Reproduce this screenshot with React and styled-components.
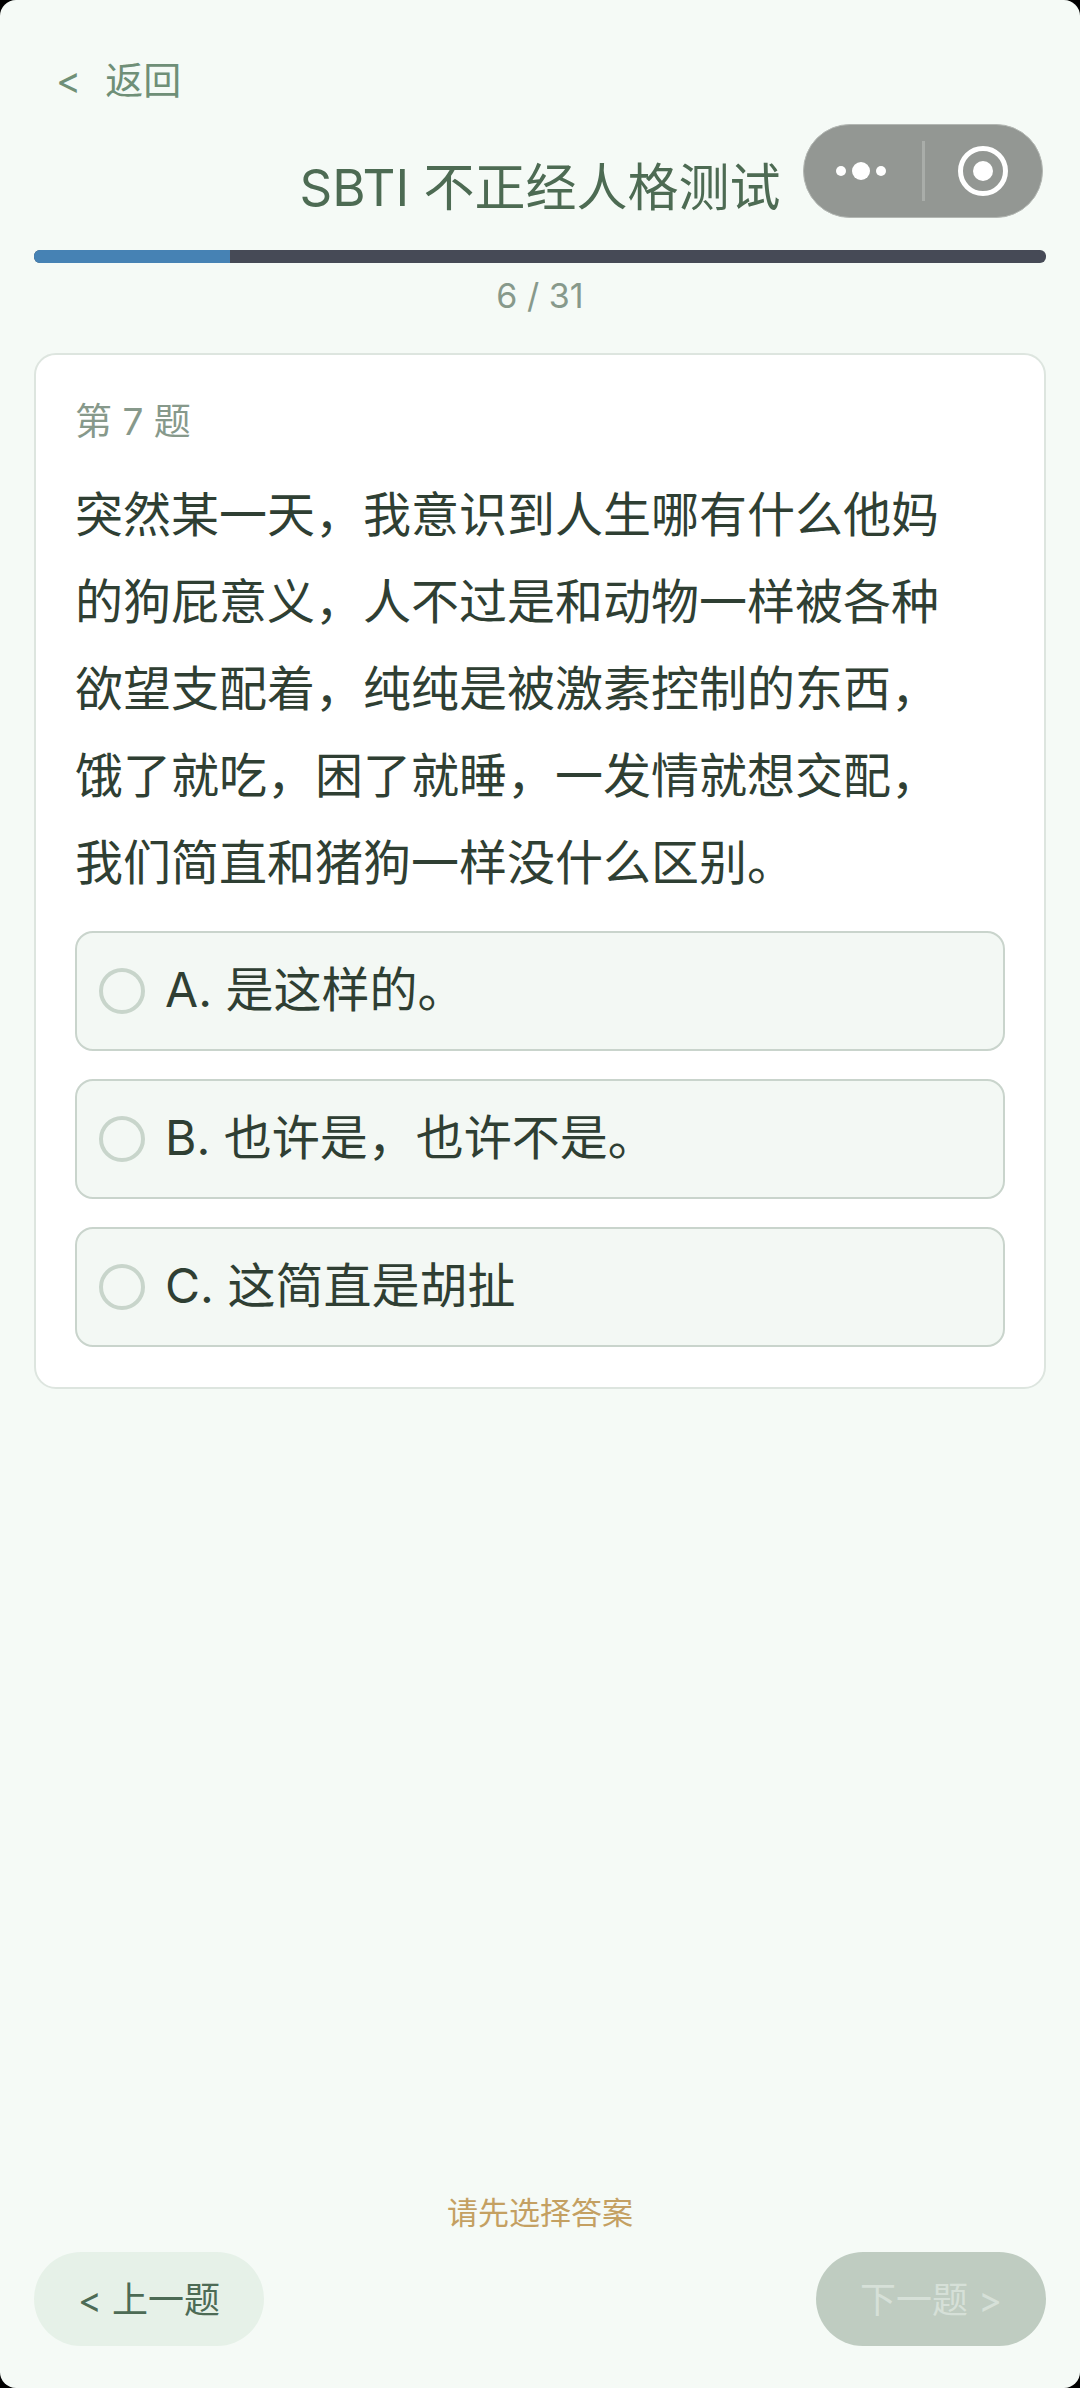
import React, { useState } from "react";
import styled, { createGlobalStyle } from "styled-components";

const TOTAL = 31;

const question = {
  number: 7,
  answered: 6,
  text: "突然某一天，我意识到人生哪有什么他妈的狗屁意义，人不过是和动物一样被各种欲望支配着，纯纯是被激素控制的东西，饿了就吃，困了就睡，一发情就想交配，我们简直和猪狗一样没什么区别。",
  options: [
    { key: "A", label: "是这样的。" },
    { key: "B", label: "也许是，也许不是。" },
    { key: "C", label: "这简直是胡扯" },
  ],
};

const App = () => {
  const [selected, setSelected] = useState("");

  const changeHandler = (e) => {
    setSelected(e.target.value);
  };

  return (
    <>
      <GlobalStyle />
      <Page>
        <BackButton type="button">
          <span>&lt;</span>
          <span>返回</span>
        </BackButton>
        <Title>SBTI 不正经人格测试</Title>
        <Capsule>
          <CapsuleButton type="button" aria-label="更多">
            <svg width="52" height="52" viewBox="0 0 52 52" fill="#fff">
              <circle cx="4" cy="26" r="5" />
              <circle cx="24" cy="26" r="9" />
              <circle cx="44" cy="26" r="5" />
            </svg>
          </CapsuleButton>
          <CapsuleDivider />
          <CapsuleButton type="button" aria-label="关闭">
            <svg width="52" height="52" viewBox="0 0 52 52">
              <circle cx="26" cy="26" r="22.5" fill="none" stroke="#fff" strokeWidth="5" />
              <circle cx="26" cy="26" r="10" fill="#fff" />
            </svg>
          </CapsuleButton>
        </Capsule>

        <ProgressTrack
          role="progressbar"
          aria-valuenow={question.answered}
          aria-valuemax={TOTAL}
        >
          <ProgressFill style={{ width: `${(question.answered / TOTAL) * 100}%` }} />
        </ProgressTrack>
        <ProgressText>
          {question.answered} / {TOTAL}
        </ProgressText>

        <Card>
          <QuestionNumber>第 {question.number} 题</QuestionNumber>
          <QuestionText>{question.text}</QuestionText>
          <OptionList>
            {question.options.map((option) => (
              <Option key={option.key}>
                <Radio
                  type="radio"
                  name="answer"
                  value={option.key}
                  checked={selected === option.key}
                  onChange={changeHandler}
                />
                <OptionText>
                  {option.key}. {option.label}
                </OptionText>
              </Option>
            ))}
          </OptionList>
        </Card>

        <Footer>
          <Hint>{selected ? "" : "请先选择答案"}</Hint>
          <FooterActions>
            <NavButton type="button">&lt; 上一题</NavButton>
            <NavButton type="button" disabled={!selected}>
              下一题 &gt;
            </NavButton>
          </FooterActions>
        </Footer>
      </Page>
    </>
  );
};

export default App;

const GlobalStyle = createGlobalStyle`
  * {
    box-sizing: border-box;
  }

  body {
    margin: 0;
    background-color: #000;
    font-family: Inter, "Noto Sans CJK SC", sans-serif;
  }

  button {
    font: inherit;
    border: none;
    padding: 0;
    background: none;
    cursor: pointer;
  }
`;

const Page = styled.main`
  position: relative;
  display: flex;
  flex-direction: column;
  min-height: 100vh;
  padding: 58px 34px 42px;
  border-radius: 16px;
  background-color: #f5faf6;
`;

const BackButton = styled.button`
  display: flex;
  align-self: flex-start;
  gap: 24px;
  margin-left: 22px;
  font-size: 38px;
  line-height: 44px;
  color: #6f8f77;
`;

const Title = styled.h1`
  margin: 56px 0 32px;
  font-size: 51px;
  font-weight: 400;
  line-height: 60px;
  text-align: center;
  color: #4d6b53;
`;

/* floats over the header, like the host app draws it */
const Capsule = styled.div`
  position: absolute;
  top: 124px;
  right: 37px;
  display: flex;
  align-items: center;
  width: 240px;
  height: 94px;
  border: 1px solid #b3b7b3;
  border-radius: 47px;
  background-color: #939793;
`;

const CapsuleButton = styled.button`
  flex: 1;
  display: flex;
  align-items: center;
  justify-content: center;
  height: 100%;

  svg {
    overflow: visible;
  }
`;

const CapsuleDivider = styled.span`
  width: 3px;
  height: 60px;
  background-color: #a9ada9;
`;

const ProgressTrack = styled.div`
  height: 13px;
  border-radius: 6px;
  overflow: hidden;
  background-color: #464a56;
`;

const ProgressFill = styled.div`
  height: 100%;
  background-color: #4682b4;
`;

const ProgressText = styled.p`
  margin: 13px 0 37px;
  font-size: 34px;
  line-height: 40px;
  text-align: center;
  color: #87998b;
`;

const Card = styled.section`
  padding: 45px 39px 40px;
  border: 2px solid #dde5df;
  border-radius: 22px;
  background-color: #fff;
`;

const QuestionNumber = styled.p`
  margin: 0 0 27px;
  font-size: 37px;
  line-height: 44px;
  color: #87998b;
`;

const QuestionText = styled.p`
  margin: 0 0 25px;
  padding-right: 40px;
  font-size: 48px;
  line-height: 87px;
  color: #2f3f33;
`;

const OptionList = styled.div`
  display: flex;
  flex-direction: column;
  gap: 28px;
`;

const Option = styled.label`
  display: flex;
  align-items: center;
  gap: 20px;
  min-height: 120px;
  padding: 0 22px;
  border: 2px solid #c9d4cc;
  border-radius: 18px;
  background-color: #f3f8f4;
  font-size: 48px;
  line-height: 60px;
  color: #2f3f33;
  cursor: pointer;
`;

const OptionText = styled.span`
  padding-bottom: 3px;
`;

const Radio = styled.input`
  appearance: none;
  flex: none;
  width: 46px;
  height: 46px;
  margin: 0;
  border: 4px solid #c8d5cb;
  border-radius: 50%;
  cursor: pointer;

  &:checked {
    border-width: 14px;
    border-color: #6f8f77;
  }
`;

const Footer = styled.footer`
  margin-top: auto;
`;

const Hint = styled.p`
  min-height: 40px;
  margin: 0 0 19px;
  font-size: 31px;
  line-height: 40px;
  text-align: center;
  color: #c4a062;
`;

const FooterActions = styled.div`
  display: flex;
  justify-content: space-between;
`;

const NavButton = styled.button`
  min-width: 230px;
  height: 94px;
  padding-bottom: 5px;
  border-radius: 47px;
  background-color: #e6f1e8;
  font-size: 36px;
  color: #4d6b55;

  &:disabled {
    background-color: #bfccc1;
    color: #d6e0d8;
    cursor: default;
  }
`;
